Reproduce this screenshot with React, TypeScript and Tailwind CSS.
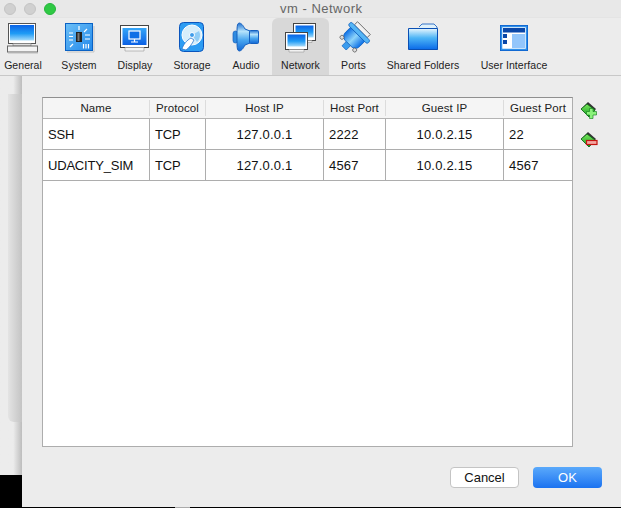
const blue = 'url(#blueFill)'

const Defs = () => (
  <svg width="0" height="0" className="absolute">
    <defs>
      <linearGradient id="blueFill" x1="0" y1="0" x2="0" y2="1">
        <stop offset="0" stopColor="#0a63e6" />
        <stop offset="0.55" stopColor="#1f9bf5" />
        <stop offset="1" stopColor="#a8dcfa" />
      </linearGradient>
      <linearGradient id="screenFill" x1="0" y1="0" x2="0" y2="1">
        <stop offset="0" stopColor="#35a6f8" />
        <stop offset="1" stopColor="#0a5fe4" />
      </linearGradient>
      <linearGradient id="chipFill" x1="0" y1="0" x2="1" y2="1">
        <stop offset="0" stopColor="#6cc0f7" />
        <stop offset="1" stopColor="#2288ea" />
      </linearGradient>
      <linearGradient id="hornFill" x1="0" y1="0" x2="0" y2="1">
        <stop offset="0" stopColor="#1f6fd0" />
        <stop offset="0.3" stopColor="#b5e3fb" />
        <stop offset="0.6" stopColor="#4ba8f0" />
        <stop offset="1" stopColor="#1267d4" />
      </linearGradient>
      <linearGradient id="folderFill" x1="0" y1="0" x2="0" y2="1">
        <stop offset="0" stopColor="#e8f6fd" />
        <stop offset="0.45" stopColor="#4db5f6" />
        <stop offset="1" stopColor="#0a6ae8" />
      </linearGradient>
      <linearGradient id="plugFill" x1="0" y1="0" x2="1" y2="0">
        <stop offset="0" stopColor="#0b6fe6" />
        <stop offset="0.5" stopColor="#8ed4fa" />
        <stop offset="1" stopColor="#0b6fe6" />
      </linearGradient>
      <linearGradient id="greenFill" x1="0" y1="0" x2="0" y2="1">
        <stop offset="0" stopColor="#7be85e" />
        <stop offset="1" stopColor="#0f9a1e" />
      </linearGradient>
    </defs>
  </svg>
)

const GeneralIcon = () => (
  <svg width="32" height="32" viewBox="0 0 32 32">
    <rect x="1.5" y="1.5" width="27" height="20" fill="#fff" stroke="#555" />
    <rect x="3" y="3" width="24" height="15.5" fill={blue} />
    <path d="M6 21.5h18v2.5H6z" fill="#ddd" stroke="#777" strokeWidth="0.6" />
    <rect x="0.5" y="24" width="30" height="6" fill="#f4f4f4" stroke="#666" />
    <path d="M1 31h30" stroke="#bbb" />
  </svg>
)

const SystemIcon = () => (
  <svg width="32" height="32" viewBox="0 0 32 32">
    <rect x="2.5" y="1.5" width="27" height="27" fill="url(#chipFill)" stroke="#0a62c4" />
    <path d="M4 30h27M31 4v26" stroke="#c4c4c4" />
    <rect x="13" y="10" width="6" height="10" fill="#222" />
    <rect x="14.5" y="11" width="2" height="8" fill="#777" />
    <g stroke="#fff" strokeWidth="1.2">
      <path d="M16 4v4M6 11h4M6 14.5h4M6 18h4M22 13h5M22 17h5M21 10l3-3M7 25l3-3M20.5 22v4.500M23 22v4.500M25.500 22v4.500" />
    </g>
  </svg>
)

const DisplayIcon = () => (
  <svg width="32" height="32" viewBox="0 0 32 32">
    <rect x="1.5" y="3.500" width="28" height="22" fill="#fff" stroke="#444" />
    <rect x="3.500" y="6" width="24" height="17" fill="url(#screenFill)" />
    <path d="M6 25.500h19v3.500H6z" fill="#f4f4f4" stroke="#999" strokeWidth="0.6" />
    <rect x="10" y="9" width="11" height="8" fill="#0e6fe6" stroke="#fff" strokeWidth="1.2" />
    <path d="M15.500 17v2.500M12 20h7" stroke="#fff" strokeWidth="1.2" />
  </svg>
)

const StorageIcon = () => (
  <svg width="32" height="32" viewBox="0 0 32 32">
    <rect x="3.500" y="0.500" width="24" height="29" rx="4" fill="#2d9cf2" stroke="#0a55bd" />
    <circle cx="16" cy="13" r="10" fill="#d6eefb" stroke="#fff" />
    <path d="M16 13 23 9a9 9 0 0 1-2 11z" fill="#90cdf6" />
    <circle cx="16" cy="13" r="2.500" fill="#3e9cea" stroke="#fff" />
    <path d="M6 27c1-4 5-9 9-11l3 2c-2 4-5 8-8 10z" fill="#fff" stroke="#1a6cc8" strokeWidth="0.7" />
  </svg>
)

const AudioIcon = () => (
  <svg width="32" height="32" viewBox="0 0 32 32">
    <rect x="3" y="9" width="5" height="12" rx="2.500" fill="#2f8be0" stroke="#1560bf" strokeWidth="0.7" />
    <path d="M9 1c2 0 4 2 6 6l5 2v12l-5 2c-2 4-4 6-6 6-2-1-2-3-2-14S7 2 9 1z" fill="url(#hornFill)" stroke="#1560bf" />
    <rect x="19.500" y="8.500" width="9" height="13" rx="1" fill="url(#hornFill)" stroke="#1560bf" />
  </svg>
)

const NetworkIcon = () => (
  <svg width="34" height="32" viewBox="0 0 34 32">
    <rect x="9.500" y="1.500" width="22" height="17" fill="#fff" stroke="#444" />
    <rect x="11.500" y="3.500" width="18" height="12" fill={blue} />
    <path d="M13 18.500h15v2H13z" fill="#eee" stroke="#888" strokeWidth="0.5" />
    <rect x="1.500" y="10.500" width="22" height="17" fill="#fff" stroke="#444" />
    <rect x="3.500" y="12.500" width="18" height="12" fill={blue} />
    <path d="M5 27.500h15v2.500H5z" fill="#f2f2f2" stroke="#888" strokeWidth="0.5" />
  </svg>
)

const PortsIcon = () => (
  <svg width="32" height="32" viewBox="0 0 32 32" className="overflow-visible">
    <g transform="rotate(45 16 16)">
      <rect x="7" y="2" width="18" height="4.500" fill="#f2f2f2" stroke="#555" strokeWidth="0.8" />
      <rect x="2.500" y="6.500" width="27" height="4.500" rx="2" fill="#55b5f5" stroke="#0f62c0" strokeWidth="0.8" />
      <path d="M6 11h20v7c0 4-3 6-6 6h-8c-3 0-6-2-6-6z" fill="url(#plugFill)" stroke="#0f62c0" strokeWidth="0.8" />
      <rect x="13" y="24" width="6" height="6" fill="#3a9cee" stroke="#0f62c0" strokeWidth="0.7" />
      <circle cx="7" cy="24" r="2" fill="#ddd" stroke="#555" strokeWidth="0.7" />
      <circle cx="25" cy="24" r="2" fill="#ddd" stroke="#555" strokeWidth="0.7" />
    </g>
  </svg>
)

const FolderIcon = () => (
  <svg width="32" height="32" viewBox="0 0 32 32">
    <path d="M12 5l3-3h12l3 3v23" fill="#dff1fb" stroke="#0a55bd" strokeWidth="0.8" />
    <path d="M1.500 6.500H30.500V27.500H1.500z" fill="url(#folderFill)" stroke="#0a4fb4" />
  </svg>
)

const InterfaceIcon = () => (
  <svg width="32" height="32" viewBox="0 0 32 32">
    <rect x="2.500" y="3.500" width="27" height="25" fill="#e6f4fe" stroke="#0a5ecb" strokeWidth="1" />
    <rect x="3.500" y="4.500" width="25" height="23" fill="#fff" stroke="#2f90ea" strokeWidth="1.500" />
    <rect x="5" y="6" width="22" height="4.500" fill="#0a47a8" />
    <rect x="5" y="12" width="4" height="4" fill="#0a47a8" />
    <rect x="5" y="18" width="4" height="4" fill="#0a47a8" />
    <rect x="14" y="12" width="13" height="14" fill="#93c6fb" />
  </svg>
)

const AddIcon = () => (
  <svg width="18" height="18" viewBox="0 0 18 18">
    <path d="M8 1 16 8 9 16 1 8z" fill="#333" />
    <path d="M1 8 7 3l8 6-6 7z" fill="url(#greenFill)" stroke="#0a6614" strokeWidth="0.8" />
    <path d="M9.500 7.500h3.500V10.500h3.500v3.500H13v3.500H9.500V14H6.500V10.500h3z" fill="#8af27a" stroke="#0a7a16" strokeWidth="0.6" />
  </svg>
)

const RemoveIcon = () => (
  <svg width="18" height="18" viewBox="0 0 18 18">
    <path d="M8 1 16 8 9 16 1 8z" fill="#333" />
    <path d="M1 8 7 3l8 6-6 7z" fill="url(#greenFill)" stroke="#0a6614" strokeWidth="0.8" />
    <rect x="6.500" y="9.500" width="10.500" height="4" fill="#f4a6a0" stroke="#c4130f" strokeWidth="1.200" />
  </svg>
)

const tools = [
  { label: 'General', icon: <GeneralIcon />, className: 'mr-[6px] w-[46px]' },
  { label: 'System', icon: <SystemIcon />, className: 'w-[54px]' },
  { label: 'Display', icon: <DisplayIcon />, className: 'w-[58px]' },
  { label: 'Storage', icon: <StorageIcon />, className: 'w-[56px]' },
  { label: 'Audio', icon: <AudioIcon />, className: 'w-[52px]' },
  { label: 'Network', icon: <NetworkIcon />, className: 'w-[57px] rounded-t-md bg-[#d8d8d8]' },
  { label: 'Ports', icon: <PortsIcon />, className: 'w-[49px]' },
  { label: 'Shared Folders', icon: <FolderIcon />, className: 'w-[90px]' },
  { label: 'User Interface', icon: <InterfaceIcon />, className: 'w-[92px]' },
]

const rows = [
  ['SSH', 'TCP', '127.0.0.1', '2222', '10.0.2.15', '22'],
  ['UDACITY_SIM', 'TCP', '127.0.0.1', '4567', '10.0.2.15', '4567'],
]

const headers = ['Name', 'Protocol', 'Host IP', 'Host Port', 'Guest IP', 'Guest Port']
const gridCols = 'grid grid-cols-[107px_56px_118px_62px_118px_68px]'

const App = () => {
  return (
    <div className="flex h-[508px] w-[621px] flex-col overflow-hidden bg-black font-['Liberation_Sans',sans-serif]">
      <Defs />
      <div className="flex h-[18px] items-center bg-[#e8e8e8] pl-[4px]">
        <div className="flex gap-2">
          <div className="h-3 w-3 rounded-full border border-[#c4c4c4] bg-[#d0d0d0]" />
          <div className="h-3 w-3 rounded-full border border-[#c4c4c4] bg-[#d0d0d0]" />
          <div className="h-3 w-3 rounded-full border border-[#25b53c] bg-[#2fc944]" />
        </div>
        <div className="ml-[224px] text-[13px] tracking-[0.5px] text-[#666]">vm - Network</div>
      </div>
      <div className="flex h-[58px] border-b border-[#c8c8c8] bg-[#ececec] shadow-[0_1px_2px_rgba(0,0,0,0.25)]">
        {tools.map(tool => (
          <div key={tool.label} className={`flex shrink-0 flex-col items-center pt-[4px] ${tool.className}`}>
            <div className="flex h-[32px] items-center justify-center">{tool.icon}</div>
            <div className="mt-[5px] whitespace-nowrap text-[10.5px] leading-[12px] tracking-[0.05px] text-[#222]">{tool.label}</div>
          </div>
        ))}
      </div>
      <div className="flex min-h-0 flex-1">
        <div className="flex w-[22px] flex-col">
          <div className="flex flex-1 flex-col bg-gradient-to-r from-[#ececec] from-60% to-[#bdbdbd] pt-[18px]">
            <div className="ml-[8px] h-[328px] rounded-bl-md bg-gradient-to-r from-[#e4e4e4] to-[#c4c4c4]" />
          </div>
          <div className="h-[32px] bg-black" />
        </div>
        <div className="flex flex-1 flex-col bg-[#ececec] pt-[21px] pl-[20px]">
          <div className="flex">
            <div className="flex h-[350px] w-[531px] flex-col border border-[#adadad] border-t-[#8f8f8f] bg-white">
              <div className={`${gridCols} h-[21px] items-center border-b border-[#b4b4b4] bg-[#f5f5f5]`}>
                {headers.map((h, i) => (
                  <div
                    key={h}
                    className={`h-[16px] text-center text-[11.5px] leading-[16px] tracking-[0.1px] text-[#222] ${i < 5 ? 'border-r border-[#dcdcdc]' : ''}`}
                  >
                    {h}
                  </div>
                ))}
              </div>
              {rows.map(row => (
                <div key={row[0]} className={`${gridCols} h-[31px] border-b border-[#adadad]`}>
                  {row.map((cell, i) => (
                    <div
                      key={i}
                      className={`flex items-center pt-px text-[13px] text-[#111] ${i === 2 || i === 4 ? 'justify-center' : 'pl-[5px]'} ${i >= 2 ? 'tracking-[0.2px]' : 'tracking-[-0.2px]'} ${i < 5 ? 'border-r border-[#adadad]' : ''}`}
                    >
                      {cell}
                    </div>
                  ))}
                </div>
              ))}
            </div>
            <div className="ml-[7px] flex flex-col gap-[12px] pt-[4px]">
              <AddIcon />
              <RemoveIcon />
            </div>
          </div>
          <div className="flex gap-[14px] pt-[20px] pl-[408px]">
            <div className="flex h-[21px] w-[69px] items-center justify-center rounded-[4px] border border-[#c4c4c4] bg-white text-[13px] text-[#111]">
              Cancel
            </div>
            <div className="flex h-[21px] w-[69px] items-center justify-center rounded-[4px] bg-gradient-to-b from-[#5aa9fb] to-[#1a72f0] text-[13px] text-white">
              OK
            </div>
          </div>
        </div>
      </div>
      <div className="flex h-px bg-black">
        <div className="ml-[175px] w-[15px] bg-[#aaa]" />
      </div>
    </div>
  )
}

export default App
